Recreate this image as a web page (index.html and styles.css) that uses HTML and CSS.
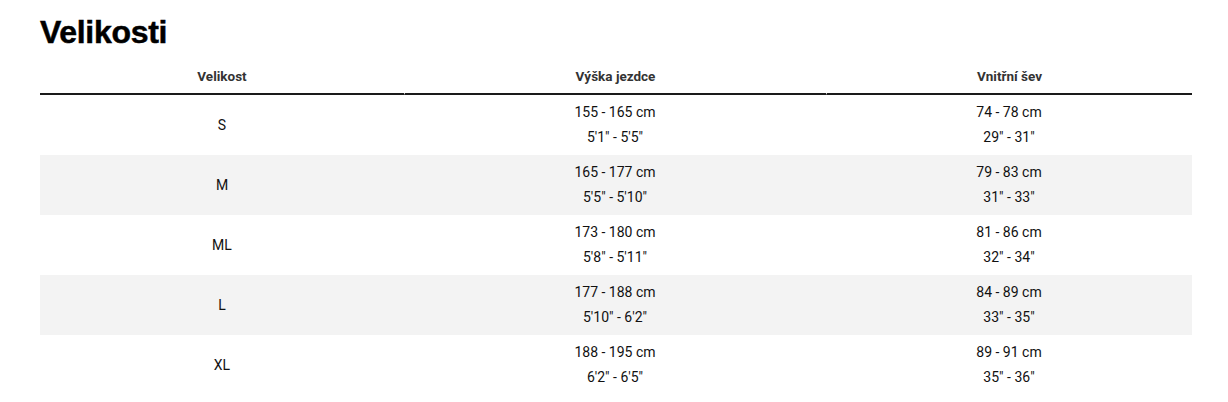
FILE: index.html
```html
<!DOCTYPE html>
<html lang="cs">
<head>
<meta charset="utf-8">
<title>Velikosti</title>
<link rel="stylesheet" href="styles.css">
</head>
<body>
<section class="sizes">
  <h2 class="sizes-title">Velikosti</h2>
  <table class="size-table">
    <colgroup>
      <col class="col-size">
      <col class="col-height">
      <col class="col-inseam">
    </colgroup>
    <thead>
      <tr>
        <th>Velikost</th>
        <th>Výška jezdce</th>
        <th>Vnitřní šev</th>
      </tr>
    </thead>
    <tbody>
      <tr>
        <td>S</td>
        <td><div>155 - 165 cm</div><div>5'1" - 5'5"</div></td>
        <td><div>74 - 78 cm</div><div>29" - 31"</div></td>
      </tr>
      <tr>
        <td>M</td>
        <td><div>165 - 177 cm</div><div>5'5" - 5'10"</div></td>
        <td><div>79 - 83 cm</div><div>31" - 33"</div></td>
      </tr>
      <tr>
        <td>ML</td>
        <td><div>173 - 180 cm</div><div>5'8" - 5'11"</div></td>
        <td><div>81 - 86 cm</div><div>32" - 34"</div></td>
      </tr>
      <tr>
        <td>L</td>
        <td><div>177 - 188 cm</div><div>5'10" - 6'2"</div></td>
        <td><div>84 - 89 cm</div><div>33" - 35"</div></td>
      </tr>
      <tr>
        <td>XL</td>
        <td><div>188 - 195 cm</div><div>6'2" - 6'5"</div></td>
        <td><div>89 - 91 cm</div><div>35" - 36"</div></td>
      </tr>
    </tbody>
  </table>
</section>
</body>
</html>
```

FILE: styles.css
```css
html, body {
  margin: 0;
  padding: 0;
  background: #fff;
}

body {
  font-family: Roboto, "Liberation Sans", sans-serif;
  color: #111;
}

.sizes {
  padding: 0 36px 0 40px;
}

.sizes-title {
  margin: 0;
  padding-top: 12px;
  height: 40px;
  font-family: "Liberation Sans", Arial, sans-serif;
  font-weight: 700;
  font-size: 32px;
  line-height: 40px;
  letter-spacing: -0.3px;
  color: #000;
  -webkit-text-stroke: 0.5px #000;
}

.size-table {
  width: 1152px;
  border-collapse: separate;
  border-spacing: 0;
  table-layout: fixed;
}

.col-size { width: 364px; }
.col-height { width: 422px; }
.col-inseam { width: 366px; }

.size-table th {
  padding: 15px 0 8px;
  font-size: 13.5px;
  line-height: 18px;
  font-weight: 700;
  color: #333;
  text-align: center;
  border-bottom: 2px solid #1a1a1a;
}

.size-table th + th {
  border-left: 1px solid #fff;
}

.size-table td {
  padding: 5px 0;
  font-size: 14px;
  line-height: 25px;
  text-align: center;
  color: #111;
  vertical-align: middle;
}

.size-table tbody tr:nth-child(even) td {
  background: #f3f3f3;
}
```
